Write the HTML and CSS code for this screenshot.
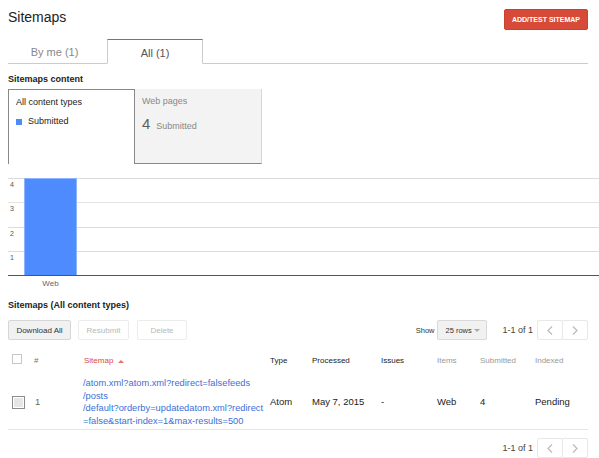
FILE: index.html
```html
<!DOCTYPE html>
<html lang="en">
<head>
<meta charset="utf-8">
<title>Sitemaps</title>
<link rel="stylesheet" href="styles.css">
</head>
<body>
<div class="page">
  <header class="top">
    <h1 class="title">Sitemaps</h1>
    <button class="btn-red">ADD/TEST SITEMAP</button>
  </header>

  <nav class="tabs">
    <div class="tab">By me (1)</div>
    <div class="tab tab-active">All (1)</div>
  </nav>

  <h2 class="section-title st-content">Sitemaps content</h2>

  <div class="cards">
    <div class="card card-all">
      <div class="card-head">All content types</div>
      <div class="legend"><span class="swatch"></span><span>Submitted</span></div>
    </div>
    <div class="card card-web">
      <div class="card-head">Web pages</div>
      <div class="stat"><span class="stat-num">4</span><span class="stat-label">Submitted</span></div>
    </div>
  </div>

  <div class="chart">
    <div class="plot">
      <div class="grid-row"><span class="ylabel">4</span></div>
      <div class="grid-row r2"><span class="ylabel">3</span></div>
      <div class="grid-row"><span class="ylabel">2</span></div>
      <div class="grid-row"><span class="ylabel">1</span></div>
      <div class="bar"></div>
    </div>
    <div class="xaxis"><span class="xlabel">Web</span></div>
  </div>

  <h2 class="section-title st-list">Sitemaps (All content types)</h2>

  <div class="toolbar">
    <div class="actions">
      <button class="btn btn-primary w-download">Download All</button>
      <button class="btn btn-disabled w-resubmit">Resubmit</button>
      <button class="btn btn-disabled w-delete">Delete</button>
    </div>
    <div class="right-tools">
      <span class="show">Show</span>
      <div class="select"><span>25 rows</span><span class="caret"></span></div>
      <div class="pager">
        <span class="count">1-1 of 1</span>
        <span class="nav-btn"><svg width="6" height="9" viewBox="0 0 6 9"><polyline points="5,0.5 1,4.5 5,8.5" fill="none" stroke="#bdbdbd" stroke-width="1.3"/></svg></span>
        <span class="nav-btn nav-next"><svg width="6" height="9" viewBox="0 0 6 9"><polyline points="1,0.5 5,4.5 1,8.5" fill="none" stroke="#bdbdbd" stroke-width="1.3"/></svg></span>
      </div>
    </div>
  </div>

  <div class="table">
    <div class="trow thead">
      <span class="cb cb-head"></span>
      <span class="h-num">#</span>
      <span class="h-sort">Sitemap<span class="sort-up"></span></span>
      <span class="h-dark">Type</span>
      <span class="h-dark">Processed</span>
      <span class="h-dark">Issues</span>
      <span class="h-light">Items</span>
      <span class="h-light">Submitted</span>
      <span class="h-light">Indexed</span>
    </div>
    <div class="trow tbody">
      <span class="cb cb-row"></span>
      <span class="num">1</span>
      <a class="link">/atom.xml?atom.xml?redirect=falsefeeds<br>/posts<br>/default?orderby=updatedatom.xml?redirect<br>=false&amp;start-index=1&amp;max-results=500</a>
      <span>Atom</span>
      <span>May 7, 2015</span>
      <span>-</span>
      <span>Web</span>
      <span>4</span>
      <span>Pending</span>
    </div>
  </div>

  <div class="pager pager-bottom">
    <span class="count">1-1 of 1</span>
    <span class="nav-btn"><svg width="6" height="9" viewBox="0 0 6 9"><polyline points="5,0.5 1,4.5 5,8.5" fill="none" stroke="#bdbdbd" stroke-width="1.3"/></svg></span>
    <span class="nav-btn nav-next"><svg width="6" height="9" viewBox="0 0 6 9"><polyline points="1,0.5 5,4.5 1,8.5" fill="none" stroke="#bdbdbd" stroke-width="1.3"/></svg></span>
  </div>
</div>
</body>
</html>
```

FILE: styles.css
```css
* { box-sizing: border-box; }

body {
  margin: 0;
  background: #fff;
  font-family: "Liberation Sans", Arial, sans-serif;
  color: #222;
}

.page {
  width: 599px;
  padding-left: 8px;
}

/* header */
.top {
  display: flex;
  justify-content: space-between;
  align-items: flex-start;
  padding-top: 9px;
  margin-right: 11px;
  height: 30px;
}
.title {
  margin: 0;
  font-size: 14px;
  line-height: 16px;
  font-weight: normal;
  color: #222;
}
.btn-red {
  height: 21px;
  padding: 0 7px;
  background: #d84a38;
  border: 1px solid #c9412f;
  border-radius: 2px;
  color: #fff;
  font-family: "Liberation Sans", Arial, sans-serif;
  font-weight: bold;
  font-size: 7px;
  line-height: 19px;
}

/* tabs */
.tabs {
  display: flex;
  margin-top: 9px;
  margin-right: 11px;
  border-bottom: 1px solid #ccc;
  height: 25px;
}
.tab {
  width: 99px;
  height: 24px;
  display: flex;
  align-items: center;
  justify-content: center;
  font-size: 11px;
  color: #888;
  padding-top: 2px;
}
.tab:first-child {
  padding-right: 6px;
}
.tab-active {
  width: 96px;
  height: 25px;
  border: 1px solid #ccc;
  border-top-color: #dd4b39;
  border-bottom: 1px solid #fff;
  background: #fff;
  color: #555;
  margin-bottom: -1px;
}

/* section titles */
.section-title {
  margin: 0;
  font-size: 9px;
  line-height: 11px;
  font-weight: bold;
  color: #222;
}
.st-content { margin-top: 10px; }
.st-list { margin-top: 11px; }

/* cards */
.cards {
  display: flex;
  margin-top: 4px;
  height: 75px;
}
.card {
  width: 127px;
  height: 75px;
  padding: 7px 7px 0;
  font-size: 9px;
  line-height: 11px;
}
.card-all {
  border: 1px solid #888;
  border-bottom: none;
  background: #fff;
  color: #222;
}
.card-web {
  background: #f3f3f3;
  border-bottom: 1px solid #888;
  border-right: 1px solid #d6d6d6;
  color: #888;
}
.legend {
  display: flex;
  align-items: center;
  margin-top: 8px;
}
.swatch {
  width: 6px;
  height: 6px;
  background: #4d8bfd;
  margin-right: 6px;
}
.stat {
  display: flex;
  align-items: baseline;
  margin-top: 8px;
}
.stat-num {
  font-size: 15px;
  line-height: 17px;
  color: #5f5f5f;
  margin-right: 6px;
}
.stat-label { color: #888; }

/* chart */
.chart {
  margin-top: 14px;
}
.plot {
  position: relative;
  display: grid;
  grid-template-rows: 24px 25px 24px 24px;
  border-bottom: 1px solid #555;
}
.grid-row {
  border-top: 1px solid #dcdcdc;
  padding: 2px 0 0 2px;
}
.r2 { border-top-color: #e4e4e4; }
.ylabel {
  display: block;
  font-size: 7px;
  line-height: 8px;
  color: #555;
}
.bar {
  position: absolute;
  left: 16px;
  top: 0;
  bottom: 0;
  width: 53px;
  background: #4d8bff;
  border: 1px solid #8db4ff;
  border-bottom: none;
}
.xaxis {
  display: flex;
  padding-left: 16px;
  margin-top: 3px;
}
.xlabel {
  width: 53px;
  text-align: center;
  font-size: 8px;
  line-height: 10px;
  color: #666;
}

/* toolbar */
.toolbar {
  display: flex;
  justify-content: space-between;
  align-items: center;
  margin-top: 9px;
  margin-right: 11px;
  height: 20px;
}
.actions {
  display: flex;
}
.btn {
  height: 20px;
  padding: 0;
  font-family: "Liberation Sans", Arial, sans-serif;
  font-size: 8px;
  border-radius: 2px;
  margin-right: 8px;
}
.btn-primary {
  background: #f1f1f1;
  border: 1px solid #d6d6d6;
  color: #333;
  margin-right: 7px;
}
.btn-disabled {
  background: #fff;
  border: 1px solid #ececec;
  color: #b8b8b8;
}
.w-download { width: 63px; }
.w-resubmit { width: 51px; }
.w-delete { width: 50px; }

.right-tools {
  display: flex;
  align-items: center;
}
.show {
  font-size: 7.5px;
  color: #333;
  margin-right: 3px;
}
.select {
  width: 50px;
  height: 20px;
  display: flex;
  align-items: center;
  padding: 0 6px 0 7px;
  background: #f1f1f1;
  border: 1px solid #d9d9d9;
  border-radius: 2px;
  font-size: 7.5px;
  color: #333;
  white-space: nowrap;
}
.caret {
  width: 0;
  height: 0;
  margin-left: auto;
  border-left: 3px solid transparent;
  border-right: 3px solid transparent;
  border-top: 3px solid #aaa;
}

.pager {
  display: flex;
  align-items: center;
  margin-left: 15px;
}
.count {
  font-size: 9px;
  color: #444;
  margin-right: 4px;
  white-space: nowrap;
}
.nav-btn {
  width: 26px;
  height: 20px;
  display: flex;
  align-items: center;
  justify-content: center;
  border: 1px solid #e8e8e8;
  border-radius: 2px;
  background: #fff;
}
.nav-next { margin-left: -1px; }

/* table */
.table {
  margin-top: 11px;
  margin-right: 11px;
}
.trow {
  display: grid;
  grid-template-columns: 22px 50px 186px 42px 69px 56px 43px 55px 1fr;
  padding-left: 4px;
}
.thead {
  height: 20px;
  align-items: center;
  font-size: 8px;
  line-height: 20px;
}
.cb {
  display: block;
}
.cb-head {
  width: 10px;
  height: 10px;
  border: 1px solid #c6c6c6;
  align-self: start;
  margin-top: 3px;
  background: #fff;
}
.h-num { color: #777; }
.h-sort {
  color: #dd4b39;
  display: flex;
  align-items: center;
}
.sort-up {
  width: 0;
  height: 0;
  margin-left: 5px;
  border-left: 3px solid transparent;
  border-right: 3px solid transparent;
  border-bottom: 3px solid #e57368;
}
.h-dark { color: #222; }
.h-light { color: #999; }

.tbody {
  align-items: center;
  padding-top: 6px;
  padding-bottom: 2px;
  border-bottom: 1px solid #e5e5e5;
  font-size: 9.5px;
  line-height: 12.5px;
  color: #222;
}
.cb-row {
  width: 13px;
  height: 13px;
  border: 1px solid #8c8c8c;
  box-shadow: inset 0 0 0 1px #fff;
  background: #e6e6e6;
}
.num {
  color: #7a6a3a;
  padding-left: 1px;
}
.link {
  color: #3b6fd8;
  white-space: nowrap;
  text-decoration: none;
  margin-left: -1px;
  font-size: 9.3px;
}

.pager-bottom {
  justify-content: flex-end;
  margin: 8px 11px 0 0;
}
```
